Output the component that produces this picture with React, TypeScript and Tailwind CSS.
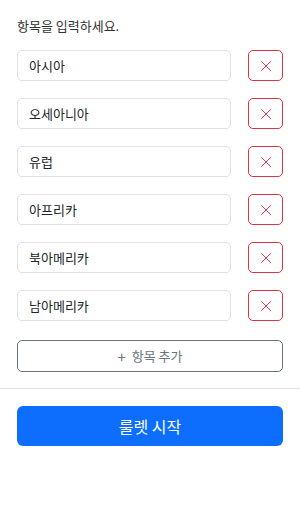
import { useState } from "react";

const initial = ["아시아", "오세아니아", "유럽", "아프리카", "북아메리카", "남아메리카"];

function XIcon() {
  return (
    <svg className="w-[14px] h-[14px]" viewBox="0 0 16 16" fill="none" stroke="currentColor" strokeWidth={1.1}>
      <path d="M2.5 2.5l11 11M13.5 2.5l-11 11" />
    </svg>
  );
}

export default function App() {
  const [items, setItems] = useState<string[]>(initial);

  return (
    <div className="w-[300px] h-[514px] bg-white text-[#212529] font-['Noto_Sans_CJK_KR','Noto_Sans',sans-serif]">
      <div className="px-[17px] pt-[16px]">
        <p className="text-[13px] leading-[20px] text-[#333]">항목을 입력하세요.</p>

        <div className="mt-[14px] flex flex-col gap-[17px]">
          {items.map((item, i) => (
            <div key={i} className="flex items-center gap-[17px]">
              <input
                value={item}
                onChange={(e) => {
                  const next = [...items];
                  next[i] = e.target.value;
                  setItems(next);
                }}
                className="w-[214px] h-[31px] rounded-[5px] border border-[#dee2e6] px-[11px] text-[13px] text-[#212529] outline-none"
              />
              <button
                onClick={() => setItems(items.filter((_, j) => j !== i))}
                className="w-[35px] h-[31px] rounded-[5px] border border-[#dc3545] text-[#dc3545] flex items-center justify-center"
              >
                <XIcon />
              </button>
            </div>
          ))}
        </div>

        <button
          onClick={() => setItems([...items, ""])}
          className="mt-[19px] w-[266px] h-[32px] rounded-[5px] border border-[#6c757d] text-[#6c757d] text-[13px] flex items-center justify-center gap-[6px]"
        >
          <span className="text-[15px] leading-none">+</span>
          <span>항목 추가</span>
        </button>
      </div>

      <div className="mt-[16px] border-t border-[#dee2e6]" />

      <div className="px-[17px] pt-[17px]">
        <button className="w-[266px] h-[40px] rounded-[6px] bg-[#0d6efd] text-white text-[16px]">
          룰렛 시작
        </button>
      </div>
    </div>
  );
}
